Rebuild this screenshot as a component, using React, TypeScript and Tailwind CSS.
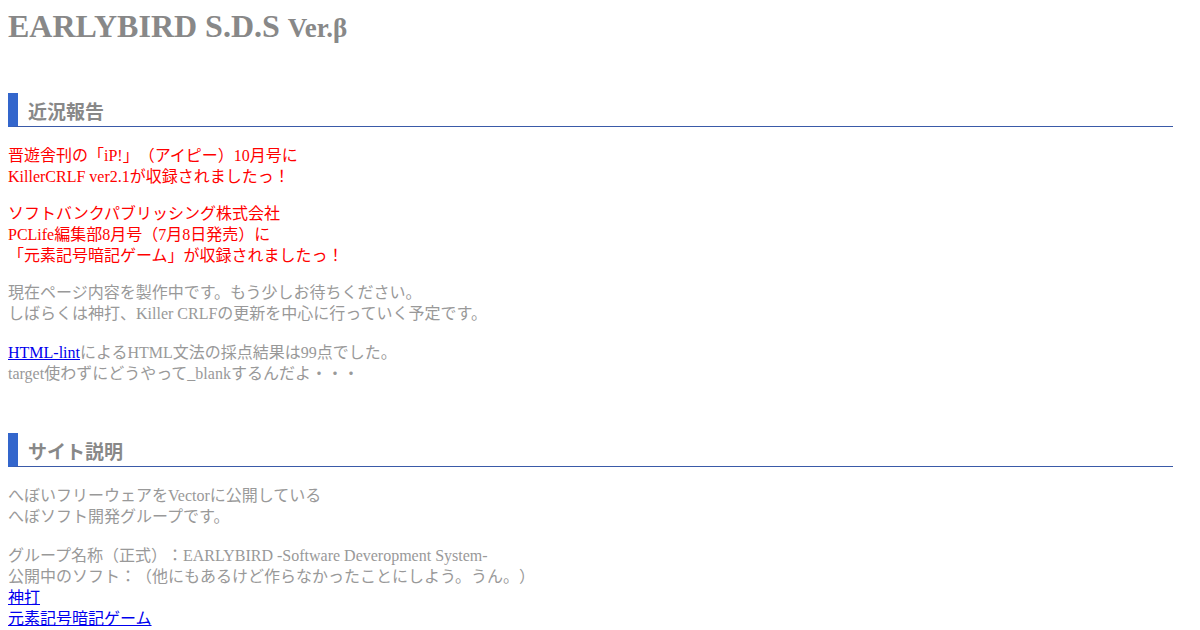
const serif = "font-['Liberation_Serif','Noto_Sans_CJK_JP',serif]";

const SectionHeading = ({ title }: { title: string }) => (
  <h2 className="h-[34px] flex items-center border-l-[10px] border-l-[#3366cc] border-b border-b-[#3a5aa8] pl-[10px] pt-px font-['Noto_Sans_CJK_JP',sans-serif] text-[19px] font-bold text-[#888888]">
    {title}
  </h2>
);

const App = () => {
  return (
    <div className={`${serif} min-h-screen bg-white pt-2 pl-2 pr-[27px] text-base leading-[21px] text-[#999999] [text-spacing-trim:space-all]`}>
      <h1 className="h-[37px] leading-[37px] text-[32px] font-bold text-[#888888]">
        EARLYBIRD S.D.S <span className="text-[27px] leading-none">Ver.β</span>
      </h1>

      <div className="mt-12">
        <SectionHeading title="近況報告" />
        <p className="mt-[18px] text-[#ff0000]">
          晋遊舎刊の「iP!」（アイピー）10月号に
          <br />
          KillerCRLF ver2.1が収録されましたっ！
        </p>
        <p className="mt-4 text-[#ff0000]">
          ソフトバンクパブリッシング株式会社
          <br />
          PCLife編集部8月号（7月8日発売）に
          <br />
          「元素記号暗記ゲーム」が収録されましたっ！
        </p>
        <p className="mt-4">
          現在ページ内容を製作中です。もう少しお待ちください。
          <br />
          しばらくは神打、Killer CRLFの更新を中心に行っていく予定です。
        </p>
        <p className="mt-[18px]">
          <a href="#" className="text-[#0000ee] underline">HTML-lint</a>によるHTML文法の採点結果は99点でした。
          <br />
          target使わずにどうやって_blankするんだよ・・・
        </p>
      </div>

      <div className="mt-[49px]">
        <SectionHeading title="サイト説明" />
        <p className="mt-[18px]">
          へぼいフリーウェアをVectorに公開している
          <br />
          へぼソフト開発グループです。
        </p>
        <p className="mt-[18px]">
          グループ名称（正式）：EARLYBIRD -Software Deveropment System-
          <br />
          公開中のソフト：（他にもあるけど作らなかったことにしよう。うん。）
          <br />
          <a href="#" className="text-[#0000ee] underline">神打</a>
          <br />
          <a href="#" className="text-[#0000ee] underline">元素記号暗記ゲーム</a>
        </p>
      </div>
    </div>
  );
};

export default App;
